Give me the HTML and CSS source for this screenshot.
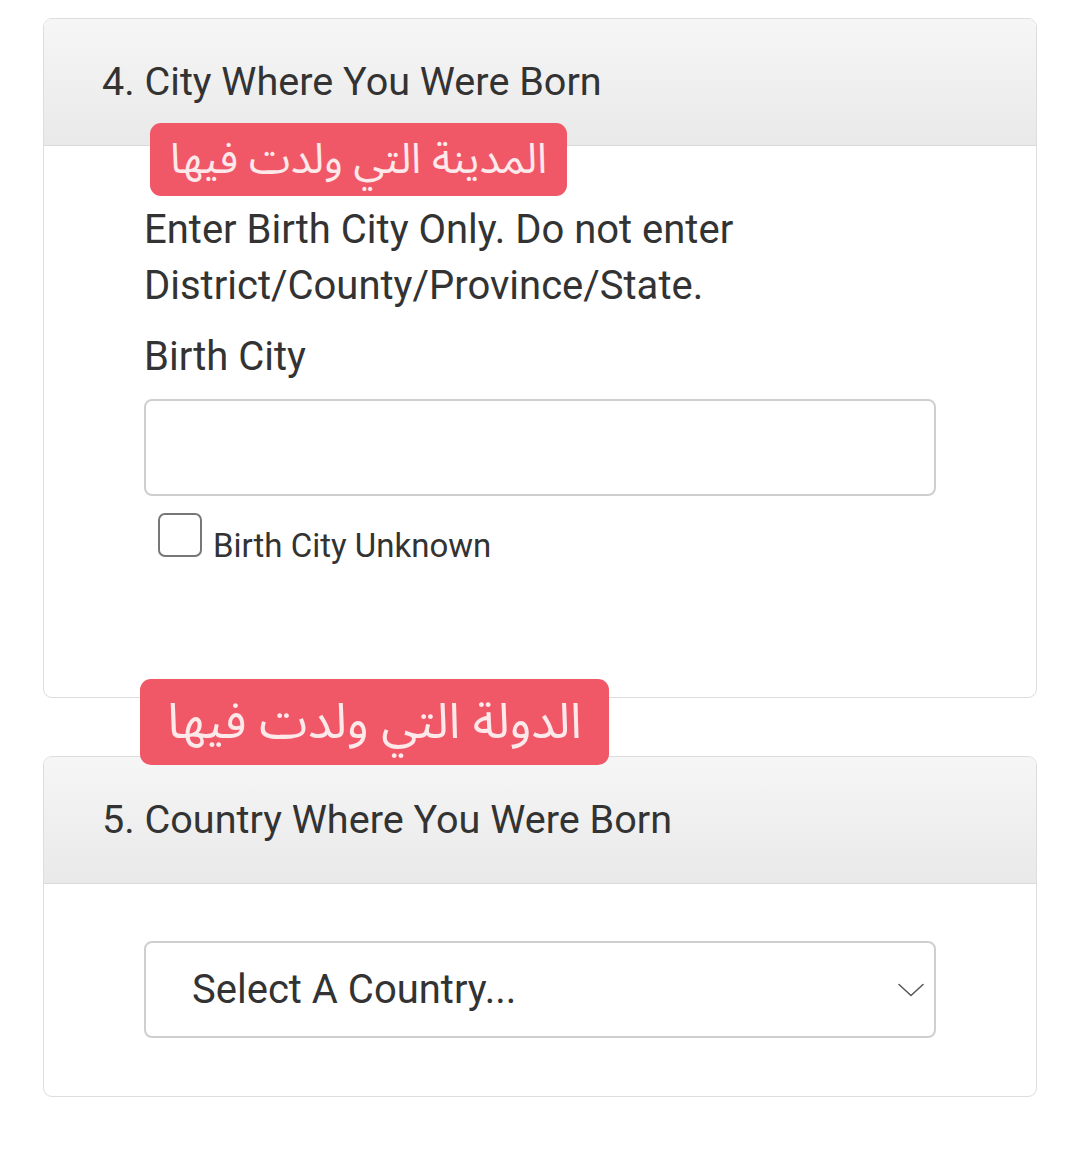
FILE: index.html
```html
<!DOCTYPE html>
<html lang="en">
<head>
<meta charset="utf-8">
<title>Birth Place</title>
<link rel="stylesheet" href="styles.css">
</head>
<body>
<div class="page">
  <section class="card">
    <div class="card-head">
      <h2 class="card-title">4. City Where You Were Born</h2>
    </div>
    <span class="tag tag-city" dir="rtl" lang="ar">المدينة التي ولدت فيها</span>
    <div class="card-body body-city">
      <p class="hint">Enter Birth City Only. Do not enter District/County/Province/State.</p>
      <label class="field-label" for="city">Birth City</label>
      <input class="text-input" id="city" type="text">
      <label class="check-row">
        <span class="check-box"></span>
        <span class="check-text">Birth City Unknown</span>
      </label>
    </div>
  </section>

  <section class="card card-country">
    <span class="tag tag-country" dir="rtl" lang="ar">الدولة التي ولدت فيها</span>
    <div class="card-head">
      <h2 class="card-title">5. Country Where You Were Born</h2>
    </div>
    <div class="card-body body-country">
      <div class="select-box">
        <span class="select-text">Select A Country...</span>
        <svg class="chevron" width="26" height="14" viewBox="0 0 26 14" aria-hidden="true">
          <path d="M1 1.5 L13 12.5 L25 1.5" fill="none" stroke="#555" stroke-width="1.5" stroke-linecap="round" stroke-linejoin="round"/>
        </svg>
      </div>
    </div>
  </section>
</div>
</body>
</html>
```

FILE: styles.css
```css
html, body {
  margin: 0;
  padding: 0;
  background: #ffffff;
}

body {
  font-family: Roboto, "Liberation Sans", Arial, sans-serif;
  color: #333333;
}

.page {
  padding: 18px 43px 40px 43px;
  width: 994px;
}

.card {
  position: relative;
  border: 1px solid #dddddd;
  border-radius: 9px;
  background: #ffffff;
}

.card-country {
  margin-top: 58px;
}

.card-head {
  height: 127px;
  box-sizing: border-box;
  border-bottom: 1px solid #d9d9d9;
  border-radius: 8px 8px 0 0;
  background: linear-gradient(to bottom, #f6f6f6 0%, #e9e9e9 100%);
  display: flex;
  align-items: center;
  padding: 0 0 2px 58px;
}

.card-title {
  margin: 0;
  font-size: 39.6px;
  font-weight: 400;
  color: #333333;
}

.tag {
  position: absolute;
  background: #f05868;
  color: #fde8ea;
  font-family: "Noto Sans Arabic", "DejaVu Sans", sans-serif;
  line-height: 1;
  border-radius: 11px;
  display: flex;
  align-items: center;
  justify-content: center;
  box-sizing: border-box;
  z-index: 2;
}

.tag-city {
  left: 106px;
  top: 104px;
  width: 417px;
  height: 73px;
  font-size: 42px;
}

.tag-country {
  left: 96px;
  top: -78px;
  width: 469px;
  height: 86px;
  font-size: 49px;
}

.card-body {
  padding-left: 100px;
  padding-right: 100px;
}

.body-city {
  padding-top: 56px;
  padding-bottom: 139px;
}

.hint {
  margin: 0;
  font-size: 40px;
  line-height: 56px;
  color: #333333;
}

.field-label {
  display: block;
  margin-top: 15px;
  font-size: 40px;
  line-height: 56px;
  color: #333333;
}

.text-input {
  display: block;
  margin-top: 14px;
  width: 100%;
  height: 97px;
  box-sizing: border-box;
  border: 2px solid #cfcfcf;
  border-radius: 8px;
  background: #ffffff;
  outline: none;
}

.check-row {
  display: flex;
  align-items: center;
  margin-top: 16px;
  margin-left: 14px;
  height: 46px;
}

.check-box {
  width: 44px;
  height: 44px;
  box-sizing: border-box;
  border: 2px solid #777777;
  border-radius: 7px;
  background: #ffffff;
}

.check-text {
  margin-left: 11px;
  font-size: 33px;
  color: #333333;
  padding-top: 20px;
}

.body-country {
  padding-top: 57px;
  padding-bottom: 58px;
}

.select-box {
  height: 97px;
  box-sizing: border-box;
  border: 2px solid #cfcfcf;
  border-radius: 8px;
  display: flex;
  align-items: center;
  justify-content: space-between;
  padding: 0 10px 0 46px;
}

.select-text {
  font-size: 40px;
  color: #333333;
}

.chevron {
  display: block;
}
```
